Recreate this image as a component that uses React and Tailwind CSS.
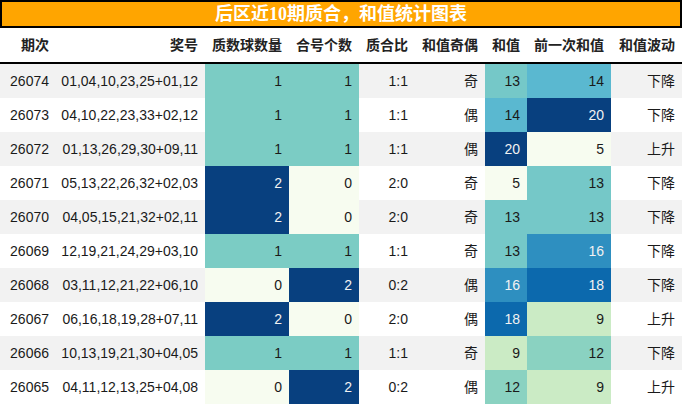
// App.jsx — 后区近10期质合/和值统计表
const ROWS = [
  ['26074', '01,04,10,23,25+01,12', 1, 1, '1:1', '奇', 13, 14, '下降'],
  ['26073', '04,10,22,23,33+02,12', 1, 1, '1:1', '偶', 14, 20, '下降'],
  ['26072', '01,13,26,29,30+09,11', 1, 1, '1:1', '偶', 20, 5, '上升'],
  ['26071', '05,13,22,26,32+02,03', 2, 0, '2:0', '奇', 5, 13, '下降'],
  ['26070', '04,05,15,21,32+02,11', 2, 0, '2:0', '奇', 13, 13, '下降'],
  ['26069', '12,19,21,24,29+03,10', 1, 1, '1:1', '奇', 13, 16, '下降'],
  ['26068', '03,11,12,21,22+06,10', 0, 2, '0:2', '偶', 16, 18, '下降'],
  ['26067', '06,16,18,19,28+07,11', 2, 0, '2:0', '偶', 18, 9, '上升'],
  ['26066', '10,13,19,21,30+04,05', 1, 1, '1:1', '奇', 9, 12, '下降'],
  ['26065', '04,11,12,13,25+04,08', 0, 2, '0:2', '偶', 12, 9, '上升'],
];

// 0-2 个数的色阶
const COUNT_BG = {
  0: 'bg-[#F7FCF0]',
  1: 'bg-[#7BCCC4]',
  2: 'bg-[#08407F] text-[#f2f2f2]',
};

// 和值色阶 (5..20)
const SUM_BG = {
  5: 'bg-[#F7FCF0]',
  9: 'bg-[#CBEBC5]',
  12: 'bg-[#8AD2C1]',
  13: 'bg-[#75C8C8]',
  14: 'bg-[#5AB8D0]',
  16: 'bg-[#2E8FC0] text-[#f2f2f2]',
  18: 'bg-[#0C69AD] text-[#f2f2f2]',
  20: 'bg-[#08407F] text-[#f2f2f2]',
};

const HEADERS = ['期次', '奖号', '质数球数量', '合号个数', '质合比', '和值奇偶', '和值', '前一次和值', '和值波动'];
const WIDTHS = ['w-[56px]', 'w-[149px]', 'w-[84px]', 'w-[70px]', 'w-[56px]', 'w-[70px]', 'w-[42px]', 'w-[84px]', 'w-[71px]'];

function Cell({ i, className = '', children }) {
  return (
    <div className={`${WIDTHS[i]} shrink-0 h-full flex items-center justify-end pr-[7px] ${className}`}>
      {children}
    </div>
  );
}

export default function App() {
  return (
    <div className="w-[682px] h-[405px] bg-white overflow-hidden font-['Liberation_Sans','Noto_Sans_CJK_SC',sans-serif] text-[14px] text-[#1a1a1a]">
      {/* 标题 */}
      <div className="h-[28px] bg-[#FFA500] border-2 border-black flex items-center justify-center">
        <span className="text-white font-bold text-[18px] leading-none font-['Liberation_Serif','Noto_Sans_CJK_SC',serif]">
          后区近10期质合，和值统计图表
        </span>
      </div>

      {/* 表头 */}
      <div className="h-[36px] flex border-b-2 border-black font-bold text-[14px] text-[#222]">
        {HEADERS.map((h, i) => (
          <Cell key={h} i={i}>{h}</Cell>
        ))}
      </div>

      {/* 数据 */}
      {ROWS.map((r, idx) => (
        <div key={r[0]} className={`h-[34px] flex ${idx % 2 === 0 ? 'bg-[#F2F2F2]' : 'bg-white'}`}>
          <Cell i={0}>{r[0]}</Cell>
          <Cell i={1}>{r[1]}</Cell>
          <Cell i={2} className={COUNT_BG[r[2]]}>{r[2]}</Cell>
          <Cell i={3} className={COUNT_BG[r[3]]}>{r[3]}</Cell>
          <Cell i={4}>{r[4]}</Cell>
          <Cell i={5}>{r[5]}</Cell>
          <Cell i={6} className={SUM_BG[r[6]]}>{r[6]}</Cell>
          <Cell i={7} className={SUM_BG[r[7]]}>{r[7]}</Cell>
          <Cell i={8}>{r[8]}</Cell>
        </div>
      ))}
    </div>
  );
}
